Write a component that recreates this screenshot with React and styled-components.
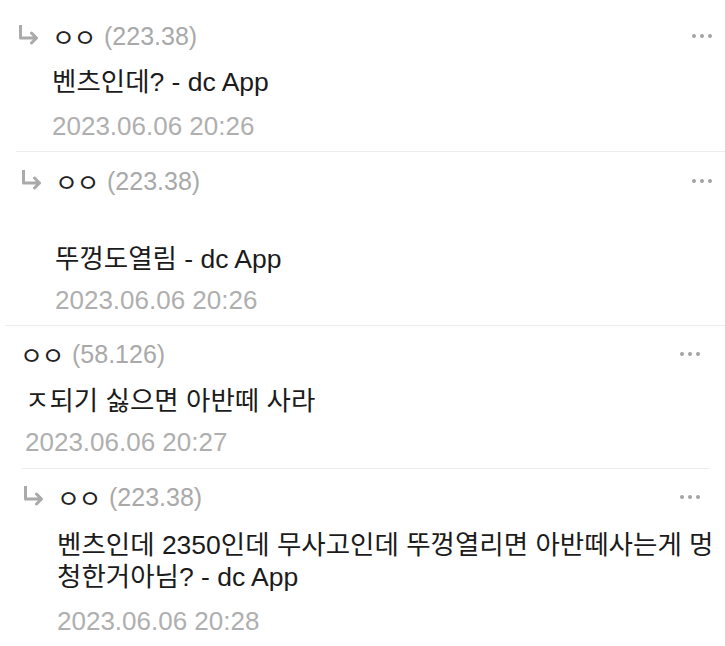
import styled, { createGlobalStyle } from "styled-components";

const GlobalStyle = createGlobalStyle`
  html, body {
    margin: 0;
    padding: 0;
    background: #ffffff;
  }
  body {
    font-family: "Liberation Sans", "Noto Sans CJK KR", sans-serif;
    -webkit-font-smoothing: antialiased;
  }
`;

const Thread = styled.div`
  width: 725px;
  height: 646px;
  overflow: hidden;
  display: flex;
  flex-direction: column;
  background: #fff;
`;

const Rule = styled.div`
  height: 1px;
  background: #ececec;
  margin-left: ${(p) => p.$from}px;
  margin-right: ${(p) => p.$to}px;
`;

const Comment = styled.div`
  display: flex;
  flex-direction: column;
  padding: ${(p) => p.$top}px ${(p) => p.$right}px ${(p) => p.$bottom}px
    ${(p) => p.$left}px;
`;

const Header = styled.div`
  display: flex;
  align-items: center;
  justify-content: space-between;
  height: 30px;
`;

const Author = styled.div`
  display: flex;
  align-items: center;
`;

const ArrowIcon = styled.svg`
  width: 21px;
  height: 20px;
  margin-right: 18px;
  flex-shrink: 0;
  margin-top: -3px;
`;

const Nick = styled.span`
  font-family: "Noto Sans CJK KR", sans-serif;
  font-size: 25px;
  font-weight: 400;
  line-height: 30px;
  letter-spacing: -1.5px;
  color: #222;
  margin-left: -5px;
`;

const Ip = styled.span`
  font-size: 25px;
  line-height: 30px;
  color: #a9a9a9;
  margin-left: 9px;
`;

const More = styled.div`
  display: flex;
  gap: 4px;
  align-items: center;
`;

const Dot = styled.span`
  width: 4px;
  height: 4px;
  border-radius: 50%;
  background: #a3a3a3;
`;

const Body = styled.p`
  margin: ${(p) => p.$gap}px 0 0 ${(p) => (p.$reply ? 34 : 0)}px;
  font-family: "Liberation Sans", "Noto Sans CJK KR", sans-serif;
  font-size: 26.5px;
  line-height: 32px;
  color: #1b1b1b;
  white-space: nowrap;
`;

const Date = styled.div`
  margin: ${(p) => p.$gap}px 0 0 ${(p) => (p.$reply ? 34 : 0)}px;
  font-size: 26px;
  line-height: 30px;
  color: #afafaf;
`;

function ReplyArrow() {
  return (
    <ArrowIcon viewBox="0 0 21 20" fill="none">
      <path
        d="M2.5 0.5V13H18.5M13.5 8L18.5 13L13.5 18"
        stroke="#aaaaaa"
        strokeWidth="3"
        strokeLinecap="round"
        strokeLinejoin="round"
      />
    </ArrowIcon>
  );
}

const comments = [
  {
    reply: true,
    ip: "223.38",
    lines: ["벤츠인데? - dc App"],
    date: "2023.06.06 20:26",
    pad: [16, 13, 10, 18],
    bodyGap: 15,
    dateGap: 13,
  },
  {
    reply: true,
    ip: "223.38",
    lines: ["뚜껑도열림 - dc App"],
    date: "2023.06.06 20:26",
    pad: [14, 13, 10, 21],
    bodyGap: 47,
    dateGap: 10,
  },
  {
    reply: false,
    ip: "58.126",
    lines: ["ㅈ되기 싫으면 아반떼 사라"],
    date: "2023.06.06 20:27",
    pad: [13, 25, 11, 25],
    bodyGap: 16,
    dateGap: 10,
  },
  {
    reply: true,
    ip: "223.38",
    lines: [
      "벤츠인데 2350인데 무사고인데 뚜껑열리면 아반떼사는게 멍",
      "청한거아님? - dc App",
    ],
    date: "2023.06.06 20:28",
    pad: [13, 25, 10, 23],
    bodyGap: 17,
    dateGap: 13,
  },
];

const rules = [
  [16, 0],
  [16, 0],
  [5, 0],
  [22, 15],
];

export default function App() {
  return (
    <>
      <GlobalStyle />
      <Thread>
        <Rule $from={16} $to={0} style={{ marginTop: 5 }} />
        {comments.map((c, i) => (
          <div key={i}>
            {i > 0 && <Rule $from={rules[i][0]} $to={rules[i][1]} />}
            <Comment
              $top={c.pad[0]}
              $right={c.pad[1]}
              $bottom={c.pad[2]}
              $left={c.pad[3]}
            >
              <Header>
                <Author>
                  {c.reply && <ReplyArrow />}
                  <Nick>ㅇㅇ</Nick>
                  <Ip>({c.ip})</Ip>
                </Author>
                <More>
                  <Dot />
                  <Dot />
                  <Dot />
                </More>
              </Header>
              <Body $reply={c.reply} $gap={c.bodyGap}>
                {c.lines.map((l, j) => (
                  <span key={j}>
                    {j > 0 && <br />}
                    {l}
                  </span>
                ))}
              </Body>
              <Date $reply={c.reply} $gap={c.dateGap}>
                {c.date}
              </Date>
            </Comment>
          </div>
        ))}
      </Thread>
    </>
  );
}
